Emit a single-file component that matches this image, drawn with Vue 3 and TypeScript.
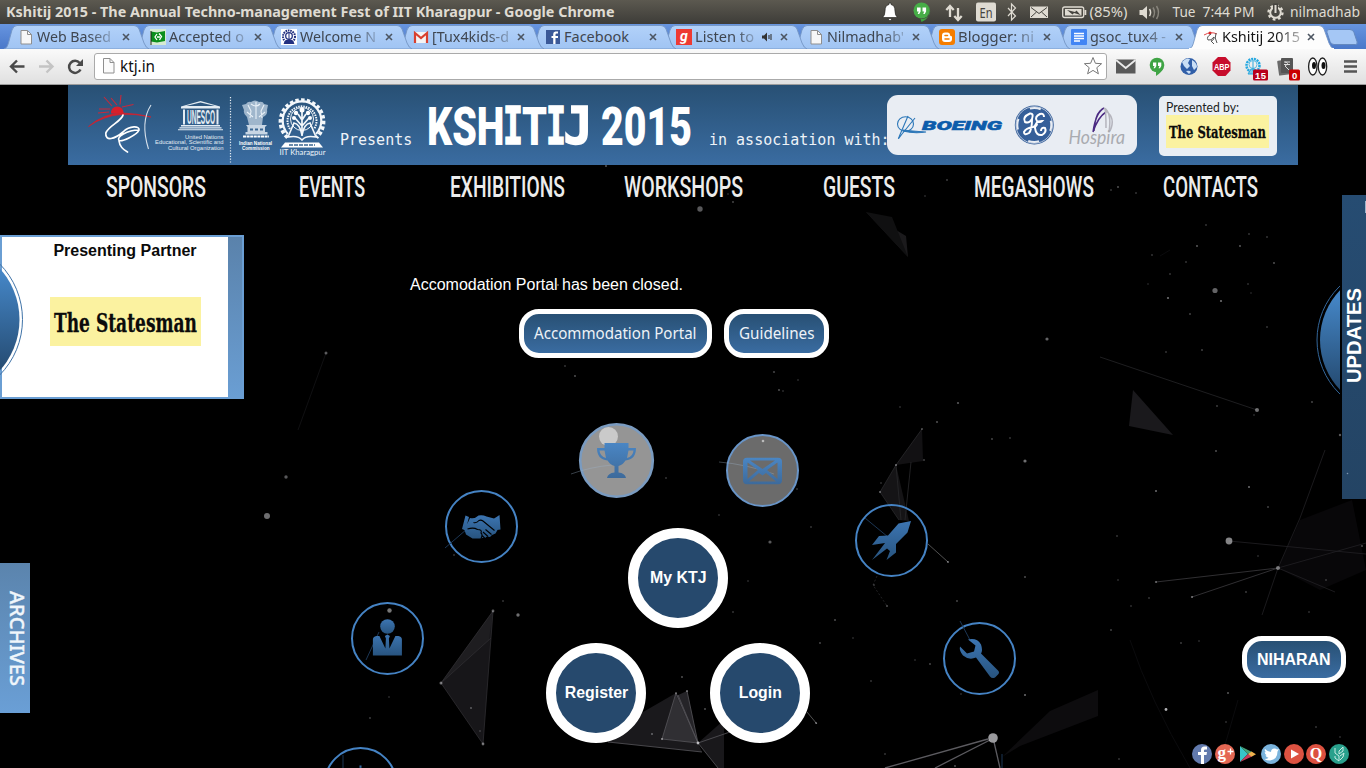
<script setup lang="ts">
import { h } from 'vue'

interface FitProps { t: string; w: number; h: number; b: number }

// Single line of text stretched to an exact width
const FitText = (p: FitProps) =>
  h('svg', { class: 'fit', width: p.w, height: p.h }, [
    h('text', { x: 0, y: p.b, textLength: p.w, lengthAdjust: 'spacingAndGlyphs' }, p.t),
  ])
FitText.props = ['t', 'w', 'h', 'b']

const tabs = [
  { t: 'Web Based', w: 74, icon: 'page' },
  { t: 'Accepted o', w: 75, icon: 'melange' },
  { t: 'Welcome N', w: 76, icon: 'seal' },
  { t: '[Tux4kids-d', w: 77, icon: 'gmail' },
  { t: 'Facebook', w: 65, icon: 'fb' },
  { t: 'Listen to', w: 59, icon: 'gaana', audio: true },
  { t: "Nilmadhab'", w: 77, icon: 'page' },
  { t: 'Blogger: ni', w: 76, icon: 'blogger' },
  { t: 'gsoc_tux4 -', w: 76, icon: 'docs' },
  { t: 'Kshitij 2015', w: 78, icon: 'ktj', active: true },
]

const menu = [
  { t: 'SPONSORS', w: 100 },
  { t: 'EVENTS', w: 66 },
  { t: 'EXHIBITIONS', w: 115 },
  { t: 'WORKSHOPS', w: 119 },
  { t: 'GUESTS', w: 72 },
  { t: 'MEGASHOWS', w: 120 },
  { t: 'CONTACTS', w: 95 },
]

// x, y, radius, opacity
const stars: number[][] = [
  [700, 209, 2.7, 0.4], [1215, 290.5, 2.6, 0.45], [1257, 410, 2, 0.5], [1229, 541, 3.4, 0.6], [1278, 568, 2, 0.5],
  [993, 738, 4.8, 0.7], [267, 516, 3, 0.5], [286, 477, 1.7, 0.4], [326, 353, 1.5, 0.4], [770, 542, 1.6, 0.4],
  [518, 615, 1.7, 0.5], [493, 611, 1.4, 0.45], [441, 683, 1.5, 0.5], [483, 744, 1.4, 0.5], [1166, 709.5, 1.4, 0.8],
  [1025, 461, 1.6, 0.5], [1047, 339, 1.6, 0.45], [948, 562, 1, 0.5], [698, 743, 1.4, 0.8], [662, 739, 1, 0.6],
  [676, 693, 1, 0.4], [687, 691, 1, 0.5], [705, 709, 0.8, 0.6], [682, 677, 0.9, 0.4], [652, 734, 0.8, 0.7],
  [1192, 597, 1.1, 0.5], [1156, 582, 1.1, 0.45], [1168, 298, 1.1, 0.5], [1221, 301, 1.1, 0.5], [1190, 314, 0.8, 0.5],
  [1202, 350, 0.8, 0.5], [1166, 352, 0.8, 0.4], [1267, 237, 0.8, 0.4], [1249, 234, 0.8, 0.4], [1206, 225, 0.8, 0.4],
  [1197, 246, 0.9, 0.45], [1240, 246, 0.9, 0.45], [1274, 263, 0.9, 0.4], [1186, 262, 0.8, 0.4], [1152, 255, 0.8, 0.4],
  [1170, 274, 0.8, 0.4], [1148, 284, 0.7, 0.3], [1248, 284, 0.8, 0.35], [1251, 293, 0.7, 0.3], [1267, 327, 0.8, 0.4],
  [1312, 402, 0.9, 0.35], [1340, 435, 1.2, 0.4], [1216, 451, 0.9, 0.4], [1156, 491, 1, 0.5], [1249, 487, 1, 0.5],
  [1217, 406, 0.9, 0.3], [1254, 415, 0.8, 0.3], [1268, 507, 0.8, 0.5], [1117, 536, 0.8, 0.4], [1118, 580, 0.7, 0.4],
  [1131, 606, 0.8, 0.35], [1111, 630, 0.8, 0.5], [1149, 598, 0.8, 0.4], [1181, 643, 0.9, 0.3], [1199, 641, 0.8, 0.3],
  [1228, 693, 1, 0.4], [1226, 722, 0.8, 0.35], [1316, 727, 0.8, 0.4], [1340, 737, 0.7, 0.4], [1119, 759, 0.8, 0.4],
  [1309, 612, 0.8, 0.35], [1326, 580, 0.8, 0.4], [1362, 546, 0.9, 0.4], [1246, 592, 0.9, 0.3], [1258, 556, 0.8, 0.3],
  [958, 403, 1.1, 0.4], [937, 422, 1.1, 0.35], [922, 429, 0.9, 0.4], [896, 465, 1, 0.5], [924, 460, 0.8, 0.5],
  [880, 492, 0.9, 0.5], [881, 483, 0.7, 0.4], [900, 407, 0.7, 0.4], [992, 439, 0.9, 0.35], [1010, 438, 0.8, 0.4],
  [1025, 577, 1, 0.35], [1025, 695, 1, 0.5], [957, 601, 0.9, 0.35], [887, 606, 0.9, 0.4], [874, 585, 0.8, 0.4],
  [835, 620, 1, 0.35], [820, 643, 0.9, 0.35], [853, 638, 0.8, 0.3], [915, 660, 0.8, 0.3], [930, 664, 0.9, 0.35],
  [871, 681, 0.8, 0.4], [811, 527, 0.8, 0.4], [797, 489, 0.8, 0.4], [719, 515, 0.8, 0.35], [748, 581, 0.8, 0.3],
  [733, 612, 0.8, 0.4], [816, 723, 0.9, 0.5], [885, 754, 0.8, 0.4], [955, 766, 0.9, 0.4], [961, 694, 0.8, 0.3],
  [565, 366, 0.8, 0.4], [575, 376, 0.9, 0.4], [774, 372, 1.1, 0.3], [779, 390, 0.9, 0.4], [783, 391, 0.7, 0.4],
  [798, 380, 0.8, 0.3], [666, 478, 0.8, 0.4], [454, 555, 0.8, 0.4], [503, 601, 0.8, 0.4], [389, 697, 0.8, 0.3],
  [370, 718, 0.9, 0.3], [471, 708, 0.9, 0.4], [480, 731, 0.8, 0.35], [606, 166, 1, 0.4], [947, 180, 0.9, 0.3],
  [1118, 187, 0.9, 0.4], [1136, 193, 0.8, 0.4], [1111, 190, 0.8, 0.4], [925, 196, 0.8, 0.3], [733, 202, 0.9, 0.35],
  [728, 194, 0.7, 0.35], [367, 90, 0.9, 0.3], [558, 285, 1, 0.4],
]

const socials = ['f', 'g', 'play', 't', 'yt', 'q', 'k']
</script>

<template>
  <div class="screen">
    <header class="titlebar">
      <FitText class="win-title" t="Kshitij 2015 - The Annual Techno-management Fest of IIT Kharagpur - Google Chrome" :w="608.5" :h="24" :b="17" />
      <svg class="tray" width="490" height="24" viewBox="876 0 490 24">
        <path d="M882.500 17.500q2.500-2 2.500-6.500c0-4 1.500-6 4-6.500v-1.500h2v1.500c2.500.5 4 2.500 4 6.500q0 4.500 2.500 6.500zM888 18.500h4q-.5 2-2 2t-2-2z" fill="#fff" stroke="#292824" stroke-width=".7" />
        <path d="M921.500 3a8 8 0 1 1-1 15.800l1 3.200c7-3 8-8 8-11a8 8 0 0 0-8-8z" fill="#3fa33f" />
        <circle cx="921.500" cy="10.500" r="8" fill="#47ad47" />
        <path d="M917 7.500h3.600v4l-1.400 2.500h-1.500l1-2.500h-1.700zM922.500 7.500h3.600v4l-1.400 2.500h-1.500l1-2.500h-1.700z" fill="#fff" />
        <path d="M950 17V7M946.300 10l3.700-4 3.700 4M958 8v11M954.300 16l3.700 4 3.700-4" stroke="#dfdbd2" stroke-width="2.300" fill="none" />
        <rect x="976" y="2.500" width="20" height="19" rx="2" fill="#dfdbd2" />
        <text x="979.500" y="17.500" textLength="13" lengthAdjust="spacingAndGlyphs" class="ui" font-size="13.500" fill="#45433e">En</text>
        <path d="M1008 8l7.500 8-4 4V4l4 4-7.500 8" stroke="#dfdbd2" stroke-width="1.200" fill="none" />
        <rect x="1030" y="6.500" width="18" height="11.500" fill="#dfdbd2" />
        <path d="M1031 7.500l8 6 8-6M1031 17l5.500-5M1047 17l-5.500-5" stroke="#45433e" fill="none" />
        <rect x="1062.700" y="7" width="21" height="10.500" rx="2" fill="none" stroke="#dfdbd2" stroke-width="1.300" />
        <path d="M1084.500 10h1.800v5h-1.800zM1065 9h16.500v6.500H1065z" fill="#dfdbd2" />
        <path d="M1067 10l8 2 1.500-1.500 4 4.500-6.500-2-1.500 1.500z" fill="#45433e" />
        <text x="1089.500" y="17" textLength="38" lengthAdjust="spacingAndGlyphs" class="ui" font-size="14" fill="#dfdbd2">(85%)</text>
        <path d="M1139.500 10h3l4.500-4v13l-4.500-4h-3z" fill="#dfdbd2" />
        <path d="M1149.500 9q2.200 3.500 0 7" stroke="#dfdbd2" stroke-width="1.500" fill="none" />
        <path d="M1153 7.500q3 5 0 10M1156.500 6q4 6.500 0 13" stroke="#88857c" stroke-width="1.500" fill="none" />
        <text x="1172.500" y="17" textLength="23" lengthAdjust="spacingAndGlyphs" class="ui" font-size="14" fill="#dfdbd2">Tue</text>
        <text x="1202.500" y="17" textLength="52" lengthAdjust="spacingAndGlyphs" class="ui" font-size="14" fill="#dfdbd2">7:44 PM</text>
        <circle cx="1275.500" cy="12.500" r="5.300" fill="none" stroke="#dfdbd2" stroke-width="2" />
        <circle cx="1275.500" cy="12.500" r="7" fill="none" stroke="#dfdbd2" stroke-width="2.300" stroke-dasharray="2.700 2.800" />
        <path d="M1275.500 3.500v10" stroke="#45433e" stroke-width="5" />
        <path d="M1275.500 5v8" stroke="#dfdbd2" stroke-width="2" />
        <text x="1290" y="17" textLength="70" lengthAdjust="spacingAndGlyphs" class="ui" font-size="14" fill="#dfdbd2">nilmadhab</text>
      </svg>
    </header>

    <nav class="tabstrip">
      <div v-for="(tab, i) in tabs" :key="i" class="tab" :class="{ active: tab.active, ['z' + i]: true }">
        <svg class="tab-shape" width="146" height="25" viewBox="0 0 146 25">
          <defs>
            <linearGradient id="tabg" x1="0" y1="0" x2="0" y2="1">
              <stop offset="0" stop-color="#b2d1f9" /><stop offset="1" stop-color="#a0c4f3" />
            </linearGradient>
          </defs>
          <path d="M0 25C3 24 4 21 5 17L8 6Q9.500 1.500 13 1.500H130Q133.500 1.500 135 5L140 19Q142 24 145 25Z" :fill="tab.active ? '#fdfdfd' : 'url(#tabg)'" stroke="#7495c4" stroke-width=".9" />
          <path v-if="tab.active" d="M0 25h145" stroke="#fdfdfd" stroke-width="2" />
        </svg>
        <div class="tab-body">
          <svg class="favicon" width="16" height="16" viewBox="0 0 16 16">
            <g v-if="tab.icon === 'page'"><path d="M3 1.500h6.500l4 4v9.500H3z" fill="#f7f7f7" stroke="#8f8f8f" /><path d="M9.500 1.500v4h4" fill="none" stroke="#8f8f8f" /></g>
            <g v-else-if="tab.icon === 'melange'"><path d="M0 0h16v16H0z" fill="#d6ead2" /><path d="M1 2.500l6 1 8-1.500v10l-8 1.500-6-1z" fill="#0b8f1c" /><path d="M1 2v14" stroke="#222" /><path d="M7 5L5 8l2 3M9 4.500l2.500 3-2 3.500M7 8h3" stroke="#fff" stroke-width="1.300" fill="none" /></g>
            <g v-else-if="tab.icon === 'seal'"><path d="M0 0h16v16H0z" fill="#fff" /><circle cx="8" cy="7.500" r="6" fill="none" stroke="#223080" stroke-width="2" stroke-dasharray="1.600 .8" /><circle cx="8" cy="7" r="3.300" fill="none" stroke="#223080" stroke-width="1.300" /><path d="M8 4v7M3 14.500h10l-2-3H5z" fill="#223080" stroke="#223080" /></g>
            <g v-else-if="tab.icon === 'gmail'"><path d="M1 3h14v11H1z" fill="#f4f4f4" /><path d="M2 14V4l6 5 6-5v10" fill="none" stroke="#d8402f" stroke-width="2.200" /></g>
            <g v-else-if="tab.icon === 'fb'"><path d="M1 1h14v14H1z" fill="#3b5998" /><path d="M10.500 15V9H13V7h-2.500V5.500q0-1 1-1H13v-2h-2.500Q8.200 2.500 8.200 5v2H6.500v2h1.700v6z" fill="#fff" /></g>
            <g v-else-if="tab.icon === 'gaana'"><path d="M0 0h16v16H0z" fill="#ee3a33" /><text x="4" y="11.500" font-size="14" font-weight="700" font-style="italic" font-family="Roboto, sans-serif" fill="#fff">g</text></g>
            <g v-else-if="tab.icon === 'blogger'"><rect width="16" height="16" rx="3" fill="#f57d00" /><path d="M6 3.500h2.500Q11 3.500 11 6q0 1 1 1t1 1v2q0 3-3 3H6q-3 0-3-3V6.500q0-3 3-3z" fill="#fff" /><path d="M6 6.500h2.500M6 10h4" stroke="#f57d00" stroke-width="1.500" stroke-linecap="round" /></g>
            <g v-else-if="tab.icon === 'docs'"><rect width="16" height="16" rx="1" fill="#4285f4" /><path d="M3 4.500h10M3 7h10M3 9.500h10M3 12h6" stroke="#fff" stroke-width="1.300" /></g>
            <g v-else><path d="M1 6q7-4 13-1" stroke="#e04848" fill="none" /><circle cx="7" cy="4" r="1.500" fill="#d22" /><path d="M8 5q-5 3-3 6 3 1 6-3 1 0-1 3l-2 1 3 3M13 4q-2 5 1 10" stroke="#555" fill="none" /></g>
          </svg>
          <FitText class="tab-title" :class="{ fade: tab.t !== 'Facebook', dark: tab.active }" :t="tab.t" :w="tab.w" :h="24" :b="17" />
          <svg v-if="tab.audio" class="audio" width="12" height="12" viewBox="0 0 12 12"><path d="M1 4.500h2L6 1.500v9L3 7.500H1z" fill="#333" /><path d="M8 4v4M10 3v6" stroke="#333" stroke-width="1.100" /></svg>
          <svg class="close" width="8" height="8" viewBox="0 0 8 8"><path d="M1 1l6 6M7 1L1 7" stroke="#4c5561" stroke-width="1.600" /></svg>
        </div>
      </div>
      <svg class="newtab" width="34" height="18" viewBox="0 0 34 18"><path d="M4 1.500h21q3 0 4 3l3 9q1 3-1.500 3H9q-3 0-4-3L2 4.500q-1-3 2-3z" fill="#a5c7f5" stroke="#6388bf" /></svg>
    </nav>

    <div class="toolbar">
      <svg class="navbtns" width="94" height="35" viewBox="0 49 94 35">
        <path d="M24.500 66.500H12M17 60.500l-6 6 6 6" stroke="#4a4a4a" stroke-width="2.400" fill="none" />
        <path d="M39 66.500h12.500M46.500 60.500l6 6-6 6" stroke="#c4c4c4" stroke-width="2.400" fill="none" />
        <path d="M80.500 69.500a6 6 0 1 1-.8-6.500" stroke="#4a4a4a" stroke-width="2.500" fill="none" />
        <path d="M83 59v7h-7z" fill="#4a4a4a" />
      </svg>
      <div class="omnibox">
        <svg width="14" height="18" viewBox="0 0 14 18"><path d="M1.500 1.500h6.500l4 4V16H1.500z" fill="#fbfbfb" stroke="#8f8f8f" /><path d="M8 1.500v4h4" fill="none" stroke="#8f8f8f" /></svg>
        <FitText class="url" t="ktj.in" :w="35" :h="25" :b="17.500" />
        <svg class="star" width="20" height="20" viewBox="0 0 20 20"><path d="M10 1.500l2.400 5.800 6.200.4-4.800 4 1.600 6.100L10 14.400l-5.400 3.400 1.600-6.100-4.800-4 6.200-.4z" fill="#fff" stroke="#777" /></svg>
      </div>
      <svg class="exts" width="259" height="35" viewBox="1107 49 259 35">
        <path d="M1116 59.500h19.500v14H1116z" fill="#595959" /><path d="M1116 60l9.700 8 9.800-8" stroke="#ebebeb" stroke-width="1.800" fill="none" />
        <circle cx="1157" cy="65" r="7.300" fill="#3fa445" /><path d="M1156 71v5q6-4 7.500-8z" fill="#3fa445" />
        <path d="M1153 62.500h3.300v3.500l-1.300 2.300h-1.500l1-2.300h-1.500zM1158 62.500h3.300v3.500l-1.300 2.300h-1.500l1-2.300h-1.500z" fill="#fff" />
        <circle cx="1189" cy="66.500" r="8.500" fill="#315fa8" /><path d="M1182 62q4-5 8-3l-2 4 2 3-3 3-3-3zM1192 60q5 3 5 7l-3 3-2-4zM1186 71q4-1 5 1l-2 2z" fill="#c9def5" />
        <path d="M1218 57h7.500l5 5.500v8l-5 5.500h-7.500l-5.500-5.500v-8z" fill="#c70d2c" />
        <text x="1214" y="70" textLength="15.500" lengthAdjust="spacingAndGlyphs" font-size="9" font-weight="700" class="arial" fill="#fff">ABP</text>
        <circle cx="1253" cy="65.500" r="6.500" fill="none" stroke="#25a8e0" stroke-width="2.500" stroke-dasharray="2 .8" /><circle cx="1253" cy="64.500" r="4" fill="none" stroke="#5abbe4" /><path d="M1253 61v10M1248 74h10l-3-5h-4z" stroke="#2aa7dd" fill="#7ac5e6" />
        <rect x="1253" y="69.500" width="15" height="11" rx="1.500" fill="#b8001c" /><text x="1255" y="78.500" textLength="11" font-size="9.500" font-weight="700" class="arial" fill="#fff">15</text>
        <rect x="1278" y="60" width="12" height="15" rx="1" fill="#6a6a6a" transform="rotate(-8 1284 67)" /><rect x="1281" y="58" width="12" height="15" rx="1" fill="#555" /><path d="M1284 62h6M1284 64.500h6M1285 62q5 1 0 4l4 4" stroke="#ddd" fill="none" />
        <rect x="1289" y="69.500" width="11" height="11" rx="1.500" fill="#c90000" /><text x="1292" y="78.500" font-size="9.500" font-weight="700" class="arial" fill="#fff">0</text>
        <g fill="#fff" stroke="#222" stroke-width="1.300"><ellipse cx="1312.800" cy="66.500" rx="4.200" ry="8.500" /><ellipse cx="1322.500" cy="66.500" rx="4.200" ry="8.500" /></g>
        <ellipse cx="1314" cy="65.500" rx="2" ry="3.500" fill="#111" /><ellipse cx="1323.500" cy="65.500" rx="2" ry="3.500" fill="#111" />
        <path d="M1344 61.500h13M1344 66.500h13M1344 71.500h13" stroke="#555" stroke-width="2.600" />
      </svg>
    </div>

    <main class="page">
      <svg class="space" width="1366" height="683" viewBox="0 85 1366 683">
        <g fill="#1a191c">
          <path d="M493 611L441 683L483 744Z" fill="#171619" />
          <path d="M493 611L441 683L489 640Z" fill="#1e1d20" />
          <path d="M676 693L612 730L608 742L702 752Z" />
          <path d="M676 693L662 739L698 743Z" fill="#302f33" />
          <path d="M687 691L676 696L698 743Z" fill="#252428" />
          <path d="M698 743L724 720V768H718Z" fill="#19181b" />
          <path d="M1133 390L1129 426L1173 435Z" />
          <path d="M866 212L908 257L906 236Z" fill="#1b1a1c" /><path d="M866 212L892 217L908 257Z" fill="#101011" />
          <path d="M922 429L896 465L923 461Z" fill="#121113" /><path d="M896 465L880 492L899 520L909 521Z" fill="#151416" />
          <path d="M1002 757L1050 711L1098 690V716L1020 746Z" fill="#0d0c0e" />
          <path d="M1278 568L1300 520L1352 500L1366 570L1320 590Z" fill="#080709" />
        </g>
        <g fill="none" stroke="#3c3b3f" stroke-width=".8">
          <path d="M1100 357L1257 410" stroke="#262628" />
          <path d="M1156 582L1278 568L1192 597" />
          <path d="M1278 568L1300 518L1325 450M1229 541L1366 554M1278 568L1366 543M1278 568L1262 615M1278 568L1335 592" stroke="#222124" />
          <path d="M885 768L988 739M935 768L990 740M994 742L1000 768" stroke="#5c5b60" stroke-width="1.300" />
          <path d="M493 611L441 683L483 744ZM441 683L491 638" stroke="#2e2d31" />
          <path d="M676 693L662 739L698 743ZM687 691L698 743M678 695L698 743M608 742L702 752M698 743L730 732M698 743L718 768" stroke="#57565b" />
          <path d="M928 544L948 562M807 712L817 724" stroke="#666" />
          <path d="M326 353L298 430" stroke="#141416" />
          <path d="M896 465L922 429M896 465L880 492L899 520M896 465L901 520M911 462L905 520" stroke="#2a292c" />
          <path d="M877 576L873 585L887 606" stroke="#2a292c" stroke-dasharray="2 2" />
          <path d="M1130 640Q1150 700 1190 768M1238 700L1225 745M1160 256L1170 250" stroke="#0e0e10" />
        </g>
        <circle v-for="(s, i) in stars" :key="i" :cx="s[0]" :cy="s[1]" :r="s[2]" fill="#dcdce0" :opacity="s[3]" />
      </svg>

      <div class="banner">
        <svg class="logos" width="272" height="80" viewBox="68 85 272 80">
          <path d="M88.500 126.500Q104 113 123 113Q137 113.500 151 117Q135 113.500 121 114.500Q103 116 88.500 126.500Z" fill="#d4202c" stroke="#d4202c" stroke-width=".7" />
          <path d="M111 113.500a6.300 6.300 0 1 1 12.500 0z" fill="#d81f2a" />
          <path d="M112 106L104 97M117 105L111 98M120 104.500L121 95M122 107L133.500 104.500M110 109L99 109M109 112L98 113" stroke="#c9283a" stroke-width="1.100" />
          <path d="M123 115C122 121 108 126 105.800 133C105 142 115 139 123 132C130 125 140 126 139 130C137 135 122 142 119 140.500C116 137 127 130 139 130M119 141Q120 148 127.500 152" stroke="#fff" stroke-width="1.700" fill="none" stroke-linecap="round" />
          <path d="M151 105Q140 122 148.500 149" stroke="#d6e0ea" stroke-width="1.100" fill="none" />
          <g fill="#e4ecf3">
            <path d="M181 106.500L200.500 101L220 106.500V108.500H181ZM186 106H215L200.500 102.500Z" fill-rule="evenodd" />
            <path d="M183 109.500h2v15h-2zM216.500 109.500h2v15h-2zM181 125h39v1.500h-39zM179.500 127.200h42v1.400h-42zM178 129.300h45v1h-45z" />
            <text x="187" y="124" textLength="28" lengthAdjust="spacingAndGlyphs" font-size="19.500" font-weight="700" class="arial">UNESCO</text>
            <g font-size="5.600" class="arial">
              <text x="185" y="138.500" textLength="38.500" lengthAdjust="spacingAndGlyphs">United Nations</text>
              <text x="155" y="144" textLength="68.500" lengthAdjust="spacingAndGlyphs">Educational, Scientific and</text>
              <text x="168" y="149.500" textLength="55.500" lengthAdjust="spacingAndGlyphs">Cultural Organization</text>
            </g>
          </g>
          <path d="M230.500 97V164" stroke="#e8eef4" stroke-width="1.200" stroke-dasharray="1.200 1.600" />
          <g fill="#c8d6e4">
            <path d="M246 104q2-3 5-2 4-3 8 0 4-1 5 2l4 1-1 5q1 5-4 7l-1 8h-13l-2-8q-4-3-3-7l-2-5z" fill="#9fb6cc" />
            <path d="M248 105l3 6-1 7M256 102v17M264 105l-3 6 1 7M251 104q5 4 9 0M247 112l6 5M265 112l-6 5" stroke="#e8f0f7" stroke-width="1.100" fill="none" />
            <path d="M246 125h21l-2 2v5h2.500v2.500h-22V132h2v-5z" />
            <path d="M250 129.500h3M255 129.500h3M260 129.500h3" stroke="#3a6793" stroke-width="2" />
            <path d="M243 136.500h26" stroke="#fff" stroke-width="1.800" stroke-dasharray="3 .6" />
            <g font-size="5.300" font-weight="700" class="arial" fill="#fff">
              <text x="239" y="144.500" textLength="33" lengthAdjust="spacingAndGlyphs">Indian National</text>
              <text x="242" y="149.500" textLength="27.500" lengthAdjust="spacingAndGlyphs">Commission</text>
            </g>
          </g>
          <g fill="none" stroke="#f4f8fb">
            <path d="M287.500 137.500A21.500 21.500 0 1 1 316.500 137.500" stroke-width="3.800" stroke-dasharray="3.400 2.200" />
            <path d="M288 134A19.300 19.300 0 1 1 316 134" stroke-width="2.200" />
            <path d="M290 129A14.500 14.500 0 1 1 314 129" stroke-width="2" stroke-dasharray="1.500 1" />
            <circle cx="302" cy="119" r="11.500" stroke-width="1" />
            <path d="M302 112v24M302 126l-7-8M302 126l7-8M302 120l-4-6M302 120l4-6" stroke-width="1.700" />
            <path d="M288 137L294 123Q300 124 302 135Q304 124 310 123L316 137Q306 135 302 140Q298 135 288 137Z" stroke-width="1.600" />
          </g>
          <g fill="#fff"><circle cx="302" cy="110" r="2.500" /><circle cx="296" cy="113" r="2.200" /><circle cx="308" cy="113" r="2.200" /><circle cx="294" cy="118" r="2" /><circle cx="310" cy="118" r="2" /><path d="M285 142.500h34l4 5h-42z" /></g>
          <path d="M289 145h26" stroke="#3a6793" stroke-width="1.500" stroke-dasharray="4 1" />
          <text x="279.500" y="155" textLength="46" lengthAdjust="spacingAndGlyphs" font-size="8" font-family="Lato, sans-serif" fill="#eef4f9">IIT Kharagpur</text>
        </svg>
        <span class="mono">Presents</span>
        <svg class="brand" width="264" height="80" viewBox="428 85 264 80">
          <text x="427" y="145" textLength="77.500" lengthAdjust="spacingAndGlyphs">KSH</text>
          <text class="slab" x="503" y="144.200" textLength="20" lengthAdjust="spacingAndGlyphs">I</text>
          <text x="522" y="145" textLength="25" lengthAdjust="spacingAndGlyphs">T</text>
          <text class="slab" x="546" y="144.200" textLength="20" lengthAdjust="spacingAndGlyphs">I</text>
          <text class="slab" x="563.500" y="144.200" textLength="29" lengthAdjust="spacingAndGlyphs">J</text>
          <text x="601" y="145" textLength="91" lengthAdjust="spacingAndGlyphs">2015</text>
        </svg>
        <span class="mono assoc">in association with:</span>
        <svg class="partners" width="250" height="60" viewBox="887 95 250 60">
          <rect x="887" y="95" width="250" height="60" rx="11" fill="#e9edf3" />
          <g fill="none" stroke="#2c77b8" stroke-width="1.100">
            <ellipse cx="905.500" cy="124" rx="8" ry="7.200" /><path d="M915 118L902 134Q897 141 899 137L908 116" /><path d="M903 130Q911 131 926 132Q914 134 903 131" fill="#2c77b8" />
          </g>
          <text x="922" y="129.500" textLength="80" lengthAdjust="spacingAndGlyphs" font-size="13.300" font-weight="900" font-style="italic" font-family="Roboto, sans-serif" fill="#0d5cab" stroke="#0d5cab" stroke-width=".5">BOEING</text>
          <circle cx="1034.300" cy="125" r="19.500" fill="#355f99" /><circle cx="1034.300" cy="125" r="17" fill="none" stroke="#e9edf3" stroke-width="2" stroke-dasharray="11 15.700" stroke-dashoffset="5" /><circle cx="1034.300" cy="125" r="18.300" fill="none" stroke="#e9edf3" stroke-width=".7" />
          <g fill="none" stroke="#fff" stroke-width="2"><path d="M1032 119Q1034 113 1030 113.500Q1022 117 1025 122Q1029 124 1032 119Q1032 130 1029 133Q1024 136 1024 132Q1026 128 1033 127Q1037 126 1037 124" /><path d="M1044 117Q1044 113 1040 114Q1034 117 1037 121Q1040 123 1042 121Q1035 121 1035 128Q1036 136 1042 135Q1047 132 1045 128Q1041 127 1041 131" /></g>
          <g fill="none"><path d="M1093 132Q1096 112 1104 108M1093 132Q1098 117 1106 112M1094 131Q1095 116 1100 111" stroke="#4b2a82" stroke-width="1.500" /><path d="M1104 108Q1112 112 1109 132M1106 111Q1116 118 1110 131M1105 109Q1106 112 1106 128" stroke="#b5b5bd" stroke-width="1.500" /></g>
          <text x="1068.500" y="143.500" textLength="56.500" lengthAdjust="spacingAndGlyphs" font-size="19" font-style="italic" font-family="Lato, sans-serif" fill="#a9abb0">Hospira</text>
        </svg>
        <div class="presented">
          <FitText class="by" t="Presented by:" :w="73" :h="19" :b="16" />
          <div class="paper"><FitText class="paper-name" t="The Statesman" :w="97" :h="33" :b="23" /></div>
        </div>
      </div>

      <nav class="menu">
        <a v-for="m in menu" :key="m.t"><FitText class="menu-text" :t="m.t" :w="m.w" :h="44" :b="32" /></a>
      </nav>

      <section class="partner-panel">
        <svg class="knob" width="24" height="160" viewBox="0 237 24 160">
          <defs><linearGradient id="kg" x1="0" y1="0" x2="0" y2="1"><stop offset=".2" stop-color="#4485c5" /><stop offset="1" stop-color="#1d3c5c" /></linearGradient></defs>
          <circle cx="-56.500" cy="319.500" r="76" fill="url(#kg)" /><circle cx="-56.500" cy="319.500" r="79" fill="none" stroke="#3f73a8" stroke-width="1" />
        </svg>
        <div class="partner-body">
          <b>Presenting Partner</b>
          <div class="paper big"><FitText class="paper-name large" t="The Statesman" :w="143" :h="49" :b="35" /></div>
        </div>
        <div class="partner-edge"></div>
      </section>

      <section class="notice">
        <FitText class="closed" t="Accomodation Portal has been closed." :w="273" :h="20" :b="15" />
        <div class="pills">
          <button class="pill"><FitText class="pill-text" t="Accommodation Portal" :w="162.500" :h="39" :b="25" /></button>
          <button class="pill"><FitText class="pill-text" t="Guidelines" :w="75.500" :h="39" :b="25" /></button>
        </div>
      </section>

      <svg class="orbit" width="720" height="358" viewBox="320 410 720 358">
        <defs>
          <linearGradient id="ig" x1="0" y1="0" x2="0" y2="1"><stop offset="0" stop-color="#3c75b2" /><stop offset="1" stop-color="#28547f" /></linearGradient>
          <linearGradient id="il" x1="0" y1="0" x2="0" y2="1"><stop offset="0" stop-color="#4a86c4" /><stop offset="1" stop-color="#3d6a9b" /></linearGradient>
        </defs>
        <g fill="none" stroke="#4583c4" stroke-width="2">
          <circle cx="481.500" cy="526.500" r="35.500" /><circle cx="387.500" cy="638.500" r="35.500" />
          <circle cx="891.500" cy="540.500" r="35.500" /><circle cx="979.500" cy="658.500" r="35.500" /><circle cx="360.500" cy="783.500" r="35.500" />
        </g>
        <circle cx="616.500" cy="460.500" r="36.300" fill="#959595" stroke="#7a9bc0" stroke-width="2.600" />
        <circle cx="608.500" cy="436.500" r="9.500" fill="#cacaca" />
        <circle cx="762.500" cy="470.500" r="35.500" fill="#6b6b6b" stroke="#6995c8" stroke-width="2" />
        <circle cx="763" cy="441" r="1.300" fill="#bbb" /><circle cx="389.500" cy="610.500" r="2.200" fill="#777" />
        <path d="M571 474Q590 467 612 465M719 462Q745 464 774 474" stroke="#9fb4cc" stroke-opacity=".35" fill="none" />
        <path d="M445 548L467 529M366 660L379 632M865 518L888 537M960 621L970 640M1002 754V768M343 755V768" stroke="#1c3654" fill="none" />
        <g fill="url(#il)">
          <path d="M604.500 443h24v5h7.500q0 11.500-10.500 12.500-3 4.500-7 5.500v6.500q6.500.5 7.500 5.500h-19q1-5 7.500-5.500v-6.500q-4-1-7-5.500-10.500-1-10.500-12.500h7.500zM599.500 450.500q.5 6 6.500 7.500l-1.500-7.500zM633.500 450.500h-5l-1.500 7.500q6-1.500 6.500-7.500z" fill-rule="evenodd" />
          <path d="M747 457.700h31q4 0 4 4v18.600q0 4-4 4h-31q-4 0-4-4v-18.600q0-4 4-4zM747.500 462.500v16.500l10.500-9zM777.500 462.500l-10.500 7.500 10.500 9zM750 460.500l12.500 8.500 12.500-8.500zM749 481.500h27l-10-8.500-3.500 2.500-3.500-2.500z" fill-rule="evenodd" />
        </g>
        <g fill="url(#ig)">
          <path d="M465.500 515.500l3.500 1.500-3.500 13.500-3.500-1.500zM499.500 515l1 14.500-3.500.5-.5-13zM470 518q5 1 8.500-2.500 4-1 8 1l7.500 2 2.500-1.500 1 13-2 3.500-3.500 1.500-2 2-3-.5-2 1.500-2.500 0-3 .5-7 0-6.500-4-1.500-4.500z" />
          <path d="M372.900 655.500v-16q0-3 3.500-3.500h3l6 12.500.5-10-1-2.500 2.500-1.500 2.500 1.500-1 2.500.5 10 6-12.500h3q3.500.5 3.500 3.500v16z" />
          <circle cx="387.500" cy="626.500" r="7.300" />
          <path d="M911 521L898.500 523.500L888 535.500L879 536L872 545L885 543L872 560L887 548.500L890 551L886.500 560L896 552.500V544L907.500 532.500Z" />
          <path d="M968 639.500q9-2 13 5 2 6 0 9l17 17q2 2 0 4l-3 3q-3 1.500-5-1l-14-19q-7 3-13-2-4-5-3-9l7 7 7-2 1.500-6z" />
          <path d="M359.500 765.500h2V768h-2z" />
        </g>
        <path d="M467.500 529q6-2 10 .5 5 0 3.500 3.500 2 1.500 0 5.500M473.500 522.500q3 1 5.500-2 2-1 4 .5l11.500 9.500M483 532l5 4.500M485.500 529.500l6 5M482 535.500l3 3" stroke="#000" stroke-width="1.100" fill="none" />
        <g fill="#26496d" stroke="#fff" stroke-width="10">
          <circle cx="678" cy="578" r="45" /><circle cx="596" cy="693" r="45" /><circle cx="760" cy="693" r="45" />
        </g>
        <g class="arial" font-weight="700" font-size="16" fill="#fff" text-anchor="middle">
          <text x="678.300" y="583" textLength="56.500" lengthAdjust="spacingAndGlyphs">My KTJ</text>
          <text x="596.500" y="698" textLength="63.500" lengthAdjust="spacingAndGlyphs">Register</text>
          <text x="760.300" y="698" textLength="43" lengthAdjust="spacingAndGlyphs">Login</text>
        </g>
      </svg>

      <aside class="archives">
        <svg width="30" height="150" viewBox="0 0 30 150"><text transform="translate(10 28) rotate(90)" textLength="95" lengthAdjust="spacingAndGlyphs" font-size="20" font-weight="500" font-family="'Noto Sans', sans-serif" fill="#f0f6fb" stroke="#f0f6fb" stroke-width=".4">ARCHIVES</text></svg>
      </aside>

      <aside class="updates">
        <svg width="26" height="304" viewBox="1316 195 26 304">
          <clipPath id="uc"><path d="M1316 195h24v304h-24z" /></clipPath>
          <g clip-path="url(#uc)"><circle cx="1392" cy="340" r="72" fill="url(#kg2)" /><circle cx="1392" cy="340" r="75" fill="none" stroke="#33679b" stroke-width="1" /></g>
          <defs><linearGradient id="kg2" x1="0" y1="0" x2="0" y2="1"><stop offset=".2" stop-color="#4485c5" /><stop offset="1" stop-color="#1d3c5c" /></linearGradient></defs>
        </svg>
        <svg class="updates-bar" width="24" height="304" viewBox="1342 195 24 304">
          <text transform="translate(1360.500 383) rotate(-90)" textLength="95" lengthAdjust="spacingAndGlyphs" font-size="21" font-weight="700" class="arial" fill="#fff">UPDATES</text>
          <path d="M1365 201h1v12h-1z" fill="#9db4cb" /><circle cx="1347.500" cy="473.500" r=".8" fill="#7d96ae" />
        </svg>
      </aside>

      <button class="pill user"><FitText class="user-text" t="NIHARAN" :w="73.500" :h="37" :b="24" /></button>

      <div class="socials">
        <svg v-for="s in socials" :key="s" width="20" height="20" viewBox="0 0 20 20">
          <g v-if="s === 'f'"><circle cx="10" cy="10" r="10" fill="#627aad" /><path d="M9 20V11H6V8h3V6q0-3.500 3.500-3.500H15v3h-2q-1 0-1 1V8h3l-.5 3H12v9z" fill="#fff" /></g>
          <g v-else-if="s === 'g'"><circle cx="10" cy="10" r="10" fill="#e46753" /><text x="2.500" y="14" font-size="17" font-weight="700" font-family="'Liberation Serif', serif" fill="#fff">g</text><path d="M12.500 7.500h6M15.500 4.500v6" stroke="#fff" stroke-width="1.300" /></g>
          <g v-else-if="s === 'play'"><path d="M2 2v16l8-8z" fill="#38c4c9" /><path d="M2 2l8 8 4-2z" fill="#46a277" /><path d="M2 18l8-8 4 2.500z" fill="#c93b59" /><path d="M10 10l3.500-2.500 4.500 2.700-4.500 2.500z" fill="#eeb24e" /></g>
          <g v-else-if="s === 't'"><circle cx="10" cy="10" r="10" fill="#7ab3dc" /><path d="M4 5q3 3 6 3 0-3.500 3.500-3.500 1.500 0 2.500 1l2-.5-1.500 2.500q0 8-7.500 9-3.500 0-5.500-1.500 3 0 4-1.200-2.300-.5-3-2.500h1.200Q3.500 10 3.800 8l1.200.3Q3 6.500 4 5z" fill="#fff" /></g>
          <g v-else-if="s === 'yt'"><circle cx="10" cy="10" r="10" fill="#dd5241" /><path d="M7 5.500v9l8-4.500z" fill="#fff" /></g>
          <g v-else-if="s === 'q'"><circle cx="10" cy="10" r="10" fill="#dc5140" /><text x="3.700" y="15" font-size="16" font-weight="700" font-family="'Liberation Serif', serif" fill="#fff">Q</text></g>
          <g v-else><circle cx="10" cy="10" r="10" fill="#29a08c" /><path d="M6 4v5l4 3v5l-4-3v-2M10 10l4-3V3l-4 4zM11 12l4-3-1 4-3 3" fill="none" stroke="#c9ece5" /></g>
        </svg>
      </div>
    </main>
  </div>
</template>

<style>
body { background: #000; overflow: hidden; }
.fit { display: block; flex: none; overflow: visible; }
</style>

<style scoped>
.screen { width: 1366px; height: 768px; overflow: hidden; background: #000; font-family: "Liberation Sans", Arial, sans-serif; }
.ui { font-family: "Noto Sans", "Open Sans", sans-serif; }
.arial { font-family: "Liberation Sans", Arial, sans-serif; }
.titlebar { height: 24px; display: flex; justify-content: space-between; padding-left: 6px; background: linear-gradient(#5c5950, #3d3c38); }
.tray { flex: none; }
.win-title { font: 700 14px "Noto Sans", sans-serif; fill: #dfdbd2; }
.tabstrip { height: 25px; display: flex; padding-left: 4px; background: linear-gradient(#6795e0, #4a78c9); position: relative; z-index: 1; }
.tab { width: 131.65px; height: 25px; flex: none; position: relative; }
.tab-shape { position: absolute; left: 0; top: 0; }
.z0 { z-index: 9; } .z1 { z-index: 8; } .z2 { z-index: 7; } .z3 { z-index: 6; } .z4 { z-index: 5; }
.z5 { z-index: 4; } .z6 { z-index: 3; } .z7 { z-index: 2; } .z8 { z-index: 1; } .z9 { z-index: 10; }
.tab-body { position: relative; display: flex; align-items: center; height: 25px; width: 127px; padding-left: 14px; box-sizing: border-box; }
.favicon { margin-right: 3px; flex: none; }
.tab-title { font: 14.5px "Noto Sans", sans-serif; fill: #3f4650; }
.tab-title.dark { fill: #151515; }
.fade { mask-image: linear-gradient(90deg, #000 70%, rgba(0, 0, 0, .3)); }
.audio { margin-left: 7px; }
.close { margin-left: auto; margin-right: 1px; }
.newtab { margin: 4px 0 0 5px; flex: none; }
.toolbar { height: 35px; display: flex; align-items: center; background: linear-gradient(#fafafa, #e0e0e0); border-bottom: 1px solid #9c9c9c; }
.omnibox { box-sizing: border-box; width: 1013px; height: 27px; margin-top: -1px; border: 1px solid #aaa; border-radius: 3px; background: #fff; display: flex; align-items: center; padding: 0 3px 0 7px; flex: none; }
.url { margin-left: 4px; font: 15.5px "Noto Sans", sans-serif; fill: #111; }
.star { margin-left: auto; }
.exts, .navbtns { flex: none; }
.page { position: relative; height: 683px; overflow: hidden; }
.space { position: absolute; left: 0; top: 0; }
.banner { position: relative; margin: 0 auto; width: 1230px; height: 80px; display: flex; background: linear-gradient(#285074, #3a6ca1); }
.logos, .brand, .partners { flex: none; }
.brand { overflow: visible; }
.mono { width: 88px; flex: none; margin-top: 46px; font: 15px/18px "DejaVu Sans Mono", monospace; color: #eef3f8; white-space: pre; }
.assoc { width: 178px; margin-left: 17px; }
.brand text { font: 900 53.5px Roboto, sans-serif; fill: #fff; }
.brand .slab { font: 700 51px "DejaVu Sans Mono", monospace; stroke: #fff; stroke-width: 1.6; }
.partners { margin-top: 10px; }
.presented { box-sizing: border-box; width: 118px; height: 60px; margin: 11px 0 0 22px; padding: 0 0 0 7px; border-radius: 5px; background: #e9eef4; flex: none; }
.by { font: 14px Lato, sans-serif; fill: #1c1f24; }
.paper { width: 103px; height: 33px; background: #fbf2a0; display: flex; justify-content: center; }
.paper.big { width: 151px; height: 49px; margin-top: 36px; }
.paper-name { font: 700 17px "DejaVu Serif", serif; fill: #0b0b0b; stroke: #0b0b0b; stroke-width: .3; }
.paper-name.large { font-size: 26px; }
.menu { position: relative; display: flex; width: 1230px; margin: 0 auto; }
.menu a { flex: 1; display: flex; justify-content: center; }
.menu-text { font: 500 29px Roboto, sans-serif; fill: #ececec; }
.partner-panel { position: absolute; left: 0; top: 150px; box-sizing: border-box; width: 244px; height: 164px; border: 2px solid #6a9ed3; background: #fff; display: flex; }
.knob { position: absolute; left: -2px; top: 0; }
.partner-body { flex: 1; display: flex; flex-direction: column; align-items: center; padding: 4px 0 0 20px; font-size: 16px; line-height: 20px; color: #0a0a0a; }
.partner-edge { width: 14px; background: linear-gradient(#5a82ab, #6a9ed3); }
.notice { position: absolute; left: 409.5px; top: 190px; }
.closed { font: 16px "Liberation Sans", sans-serif; fill: #fff; }
.pills { display: flex; gap: 12px; margin: 14px 0 0 109.5px; }
.pill { border: 5px solid #fff; border-radius: 20px; padding: 0 10px; background: linear-gradient(#285074, #3a6ca1); display: block; }
.pill-text { font: 16.5px "Noto Sans", sans-serif; fill: #edf2f7; }
.orbit { position: absolute; left: 320px; top: 325px; }
.archives { position: absolute; left: 0; top: 478px; width: 30px; height: 150px; background: linear-gradient(#5b84ad, #6a9fd6); }
.updates { position: absolute; right: 0; top: 110px; display: flex; }
.updates-bar { background: linear-gradient(#264c72, #244464); }
.user { position: absolute; left: 1242px; top: 551px; }
.user-text { font: 700 16px "Liberation Sans", sans-serif; fill: #fff; }
.socials { position: absolute; left: 1192px; top: 659px; display: flex; gap: 2.9px; }
</style>
